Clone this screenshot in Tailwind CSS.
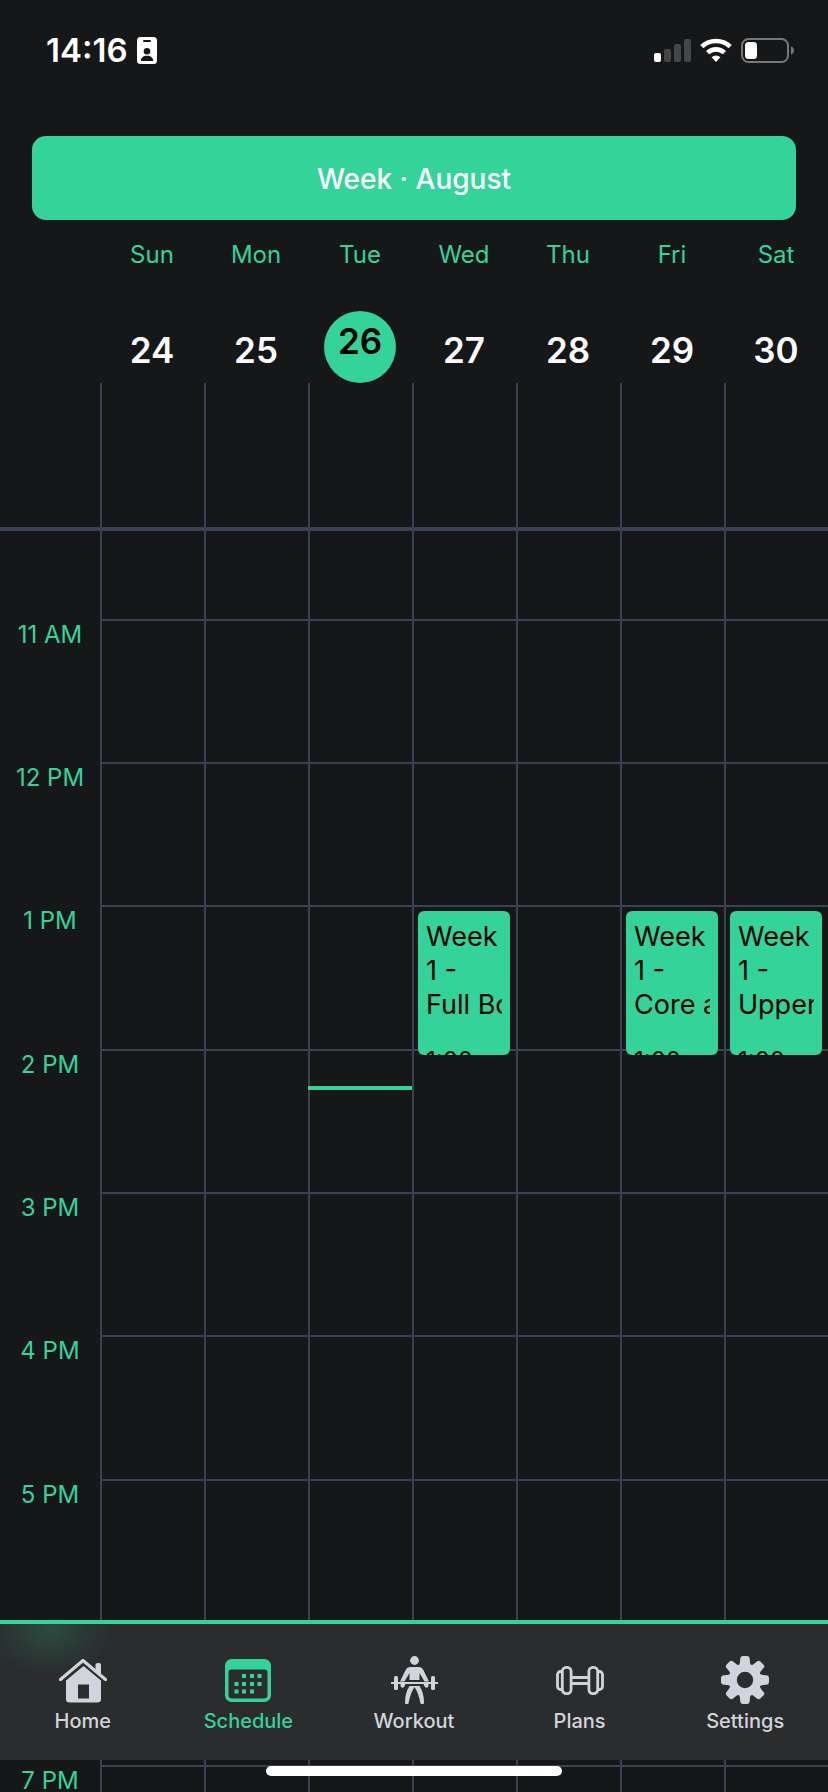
<!DOCTYPE html>
<html lang="en">
<head>
<meta charset="utf-8">
<meta name="viewport" content="width=device-width, initial-scale=1">
<title>Schedule</title>
<script src="https://cdn.jsdelivr.net/npm/@tailwindcss/browser@4"></script>
</head>
<body class="bg-[#161719]">
<div class="relative flex h-screen flex-col overflow-hidden bg-[#161719] font-['Inter',sans-serif] text-white">

  <!-- Status bar -->
  <div class="flex h-[100px] shrink-0 items-center justify-between pr-[34px] pl-[46px]">
    <div class="flex items-center gap-[9px]">
      <span class="text-[33px] leading-10 font-semibold">14:16</span>
      <svg class="h-[27px] w-5" viewBox="0 0 20 27" aria-hidden="true">
        <rect width="20" height="27" rx="3.5" fill="#fff"/>
        <rect x="6" y="3" width="8" height="2" rx="1" fill="#161719"/>
        <circle cx="10" cy="14.2" r="3.3" fill="#161719"/>
        <path d="M3.8 24c0-3.200 2.400-5.200 6.200-5.200s6.200 2 6.200 5.200z" fill="#161719"/>
      </svg>
    </div>
    <div class="flex items-center gap-[9px]">
      <svg class="h-[23px] w-[37px]" viewBox="0 0 37 23" aria-hidden="true">
        <rect y="14" width="7" height="9" rx="2" fill="#fff"/>
        <rect x="10" y="10" width="7" height="13" rx="2" fill="#454648"/>
        <rect x="20" y="5" width="7" height="18" rx="2" fill="#454648"/>
        <rect x="30" width="7" height="23" rx="2" fill="#454648"/>
      </svg>
      <svg class="h-6 w-8" viewBox="0 0 32 24" aria-hidden="true">
        <g fill="none" stroke="#fff" stroke-width="4.600">
          <path d="M1.800 8.700A20.500 20.500 0 0 1 30.200 8.700"/>
          <path d="M7.600 14.700A12.200 12.200 0 0 1 24.400 14.700"/>
        </g>
        <path d="M11.600 19.200a6.600 6.600 0 0 1 8.800 0L16 24z" fill="#fff"/>
      </svg>
      <svg class="h-[25px] w-[53px]" viewBox="0 0 53 25" aria-hidden="true">
        <rect x="1" y="1" width="46" height="23" rx="6.500" fill="none" stroke="#77787a" stroke-width="2"/>
        <rect x="4" y="4" width="12" height="17" rx="3.500" fill="#fff"/>
        <path d="M50 8.500c2 .6 3 2.200 3 4s-1 3.400-3 4z" fill="#77787a"/>
      </svg>
    </div>
  </div>

  <!-- Period selector -->
  <div class="mt-9 shrink-0 px-8">
    <button type="button" class="flex h-[84px] w-full items-center justify-center rounded-[14px] bg-[#34d399] pt-px text-[28px] leading-8 font-medium text-white">Week · August</button>
  </div>

  <!-- Day header -->
  <div class="flex h-[163px] shrink-0">
    <div class="w-[100px] shrink-0"></div>
    <div class="grid flex-1 grid-cols-7 text-center text-2xl text-[#34d399]">
      <div class="pt-[19px]">Sun<p class="mt-[59px] text-[35px] leading-10 font-semibold text-[#fafafa]">24</p></div>
      <div class="pt-[19px]">Mon<p class="mt-[59px] text-[35px] leading-10 font-semibold text-[#fafafa]">25</p></div>
      <div class="pt-[19px]">Tue<p class="mx-auto mt-10 size-[72px] rounded-full bg-[#34d399] text-[35px] leading-[60px] font-semibold text-black">26</p></div>
      <div class="pt-[19px]">Wed<p class="mt-[59px] text-[35px] leading-10 font-semibold text-[#fafafa]">27</p></div>
      <div class="pt-[19px]">Thu<p class="mt-[59px] text-[35px] leading-10 font-semibold text-[#fafafa]">28</p></div>
      <div class="pt-[19px]">Fri<p class="mt-[59px] text-[35px] leading-10 font-semibold text-[#fafafa]">29</p></div>
      <div class="pt-[19px]">Sat<p class="mt-[59px] text-[35px] leading-10 font-semibold text-[#fafafa]">30</p></div>
    </div>
  </div>

  <!-- All-day strip -->
  <div class="flex h-[148px] shrink-0 border-b-4 border-[#394152]">
    <div class="w-[100px] shrink-0"></div>
    <div class="grid flex-1 grid-cols-7 *:border-l-2 *:border-[#394152]"><div></div><div></div><div></div><div></div><div></div><div></div><div></div></div>
  </div>

  <!-- Hours -->
  <main class="min-h-0 flex-1 overflow-hidden">
    <div class="flex h-[88px]">
      <div class="w-[100px] shrink-0"></div>
      <div class="grid flex-1 grid-cols-7 *:border-l-2 *:border-[#394152]"><div></div><div></div><div></div><div></div><div></div><div></div><div></div></div>
    </div>
    <div class="text-2xl text-[#34d399] *:flex *:h-[143px] *:nth-[3n]:h-36">
      <div>
        <div class="w-[100px] shrink-0 text-center">11 AM</div>
        <div class="grid flex-1 grid-cols-7 *:border-t-2 *:border-l-2 *:border-[#394152]"><div></div><div></div><div></div><div></div><div></div><div></div><div></div></div>
      </div>
      <div>
        <div class="w-[100px] shrink-0 text-center">12 PM</div>
        <div class="grid flex-1 grid-cols-7 *:border-t-2 *:border-l-2 *:border-[#394152]"><div></div><div></div><div></div><div></div><div></div><div></div><div></div></div>
      </div>
      <div>
        <div class="w-[100px] shrink-0 text-center">1 PM</div>
        <div class="grid flex-1 grid-cols-7 *:border-t-2 *:border-l-2 *:border-[#394152]">
          <div></div><div></div><div></div>
          <div class="relative">
            <article class="absolute top-1 right-[6px] left-1 h-36 overflow-hidden rounded-md bg-[#34d399] px-2 pt-[9px] text-black">
              <h2 class="overflow-hidden text-[27px] leading-[34px] whitespace-nowrap">Week<br>1 -<br>Full Body</h2>
              <p class="mt-[22px] text-2xl leading-[34px]">1:00</p>
            </article>
          </div>
          <div></div>
          <div class="relative">
            <article class="absolute top-1 right-[6px] left-1 h-36 overflow-hidden rounded-md bg-[#34d399] px-2 pt-[9px] text-black">
              <h2 class="overflow-hidden text-[27px] leading-[34px] whitespace-nowrap">Week<br>1 -<br>Core and</h2>
              <p class="mt-[22px] text-2xl leading-[34px]">1:00</p>
            </article>
          </div>
          <div class="relative">
            <article class="absolute top-1 right-[6px] left-1 h-36 overflow-hidden rounded-md bg-[#34d399] px-2 pt-[9px] text-black">
              <h2 class="overflow-hidden text-[27px] leading-[34px] whitespace-nowrap">Week<br>1 -<br>Upper</h2>
              <p class="mt-[22px] text-2xl leading-[34px]">1:00</p>
            </article>
          </div>
        </div>
      </div>
      <div>
        <div class="w-[100px] shrink-0 text-center">2 PM</div>
        <div class="grid flex-1 grid-cols-7 *:border-t-2 *:border-l-2 *:border-[#394152]"><div></div><div></div><div class="relative"><div class="absolute top-[35px] right-0 -left-[2px] h-1 bg-[#34d399]"></div></div><div></div><div></div><div></div><div></div></div>
      </div>
      <div>
        <div class="w-[100px] shrink-0 text-center">3 PM</div>
        <div class="grid flex-1 grid-cols-7 *:border-t-2 *:border-l-2 *:border-[#394152]"><div></div><div></div><div></div><div></div><div></div><div></div><div></div></div>
      </div>
      <div>
        <div class="w-[100px] shrink-0 text-center">4 PM</div>
        <div class="grid flex-1 grid-cols-7 *:border-t-2 *:border-l-2 *:border-[#394152]"><div></div><div></div><div></div><div></div><div></div><div></div><div></div></div>
      </div>
      <div>
        <div class="w-[100px] shrink-0 text-center">5 PM</div>
        <div class="grid flex-1 grid-cols-7 *:border-t-2 *:border-l-2 *:border-[#394152]"><div></div><div></div><div></div><div></div><div></div><div></div><div></div></div>
      </div>
      <div>
        <div class="w-[100px] shrink-0"></div>
        <div class="grid flex-1 grid-cols-7 *:border-t-2 *:border-l-2 *:border-[#394152]"><div></div><div></div><div></div><div></div><div></div><div></div><div></div></div>
      </div>
      <div>
        <div class="w-[100px] shrink-0 text-center">7 PM</div>
        <div class="grid flex-1 grid-cols-7 *:border-t-2 *:border-l-2 *:border-[#394152]"><div></div><div></div><div></div><div></div><div></div><div></div><div></div></div>
      </div>
    </div>
  </main>

  <!-- Tab bar -->
  <nav class="absolute inset-x-0 bottom-8 grid h-[140px] grid-cols-5 border-t-4 border-[#34d399] bg-[#2a2c2d] bg-[radial-gradient(64px_46px_at_50px_6px,#2c4b40,#2b3a36_50%,#2a2c2d)] pt-8 text-xl font-medium text-[#d1d5db]">
    <a href="#home" class="flex flex-col items-center gap-[3px]">
      <svg class="size-12" viewBox="0 0 48 48" aria-hidden="true">
        <path d="M2 23.500 24.500 4.500 47 23.500" transform="translate(-.5 0)" fill="none" stroke="#d1d5db" stroke-width="3.200" stroke-linecap="round" stroke-linejoin="round"/>
        <path d="M36.500 8.500a2 2 0 0 1 2-1.500h1.500a2 2 0 0 1 2 2v10l-5.500-4.500z" fill="#d1d5db"/>
        <path fill-rule="evenodd" d="M24.500 10 42 24.500V43a3.500 3.500 0 0 1-3.500 3.500h-28A3.500 3.500 0 0 1 7 43V24.500zM19 28.500V42.500h11V28.500z" fill="#d1d5db"/>
      </svg>
      Home
    </a>
    <a href="#schedule" aria-current="page" class="flex flex-col items-center gap-[3px] text-[#34d399]">
      <svg class="size-12" viewBox="0 0 48 48" fill="#34d399" aria-hidden="true">
        <path fill-rule="evenodd" d="M7.500 3h33a6.500 6.500 0 0 1 6.500 6.500v30a6.500 6.500 0 0 1-6.500 6.500h-33A6.500 6.500 0 0 1 1 39.500v-30A6.500 6.500 0 0 1 7.500 3zM7.500 13.500A3 3 0 0 0 4.500 16.500v22.500a3.500 3.500 0 0 0 3.500 3.500h32a3.500 3.500 0 0 0 3.500-3.500v-22.500a3 3 0 0 0-3-3z"/>
        <path d="M18 18h4v4h-4zM26 18h4v4h-4zM33.500 18h4v4h-4zM10.500 26h4v4h-4zM18 26h4v4h-4zM26 26h4v4h-4zM33.500 26h4v4h-4zM10.500 33.500h4v4h-4zM18 33.500h4v4h-4zM26 33.500h4v4h-4z"/>
      </svg>
      Schedule
    </a>
    <a href="#workout" class="flex flex-col items-center gap-[3px]">
      <svg class="size-12" viewBox="0 0 48 48" fill="#d1d5db" aria-hidden="true">
        <circle cx="24.500" cy="4.500" r="4.400"/>
        <path d="M20.500 11h8c2.500 0 4 1.200 5 3.300l5.500 11.200h-4.500l-5-8.500v7h-10v-7l-5 8.500H10l5.500-11.200c1-2.100 2.500-3.300 5-3.300z"/>
        <path d="M1 26h47v2H1z"/>
        <rect x="4" y="20" width="4" height="14" rx="1.500"/>
        <rect x="41" y="20" width="4" height="14" rx="1.500"/>
        <path d="M10.500 28h5l-1.300 2.700a2 2 0 0 1-3.700-1zM38.500 28h-5l1.300 2.700a2 2 0 0 0 3.700-1zM19.500 30h10c3 4.500 4.500 10 4.500 16.500 0 2.200-3 2.600-3.600.4-1.200-6-3-11.500-5.900-15.900-2.900 4.400-4.700 9.900-5.900 15.900-.6 2.200-3.600 1.800-3.600-.4 0-6.500 1.500-12 4.500-16.500z"/>
      </svg>
      Workout
    </a>
    <a href="#plans" class="flex flex-col items-center gap-[3px]">
      <svg class="size-12" viewBox="0 0 48 48" fill="none" stroke="#d1d5db" stroke-width="2.800" aria-hidden="true">
        <rect x="6.300" y="11.400" width="8.800" height="26.200" rx="4"/>
        <rect x="32.900" y="11.400" width="8.800" height="26.200" rx="4"/>
        <path d="M6.300 15.500H4.500a3 3 0 0 0-3 3v12a3 3 0 0 0 3 3h1.800M41.700 15.500h1.800a3 3 0 0 1 3 3v12a3 3 0 0 1-3 3h-1.800M15.100 21.500h17.800M15.100 27.500h17.800"/>
      </svg>
      Plans
    </a>
    <a href="#settings" class="flex flex-col items-center gap-[3px]">
      <svg class="size-12" viewBox="0 0 48 48" aria-hidden="true">
        <g fill="#d1d5db">
          <path fill-rule="evenodd" d="M24 7.500a16.500 16.500 0 1 1 0 33 16.500 16.500 0 0 1 0-33zm0 8.300a8.200 8.200 0 1 0 0 16.400 8.200 8.200 0 0 0 0-16.400z"/>
          <path id="tooth" d="M17.500 10c1.200-1.500 1.500-3 1.800-7.500A2.600 2.600 0 0 1 21.700 0h4.600a2.600 2.600 0 0 1 2.400 2.500c.3 4.500.6 6 1.800 7.500z"/>
          <use href="#tooth" transform="rotate(45 24 24)"/>
          <use href="#tooth" transform="rotate(90 24 24)"/>
          <use href="#tooth" transform="rotate(135 24 24)"/>
          <use href="#tooth" transform="rotate(180 24 24)"/>
          <use href="#tooth" transform="rotate(225 24 24)"/>
          <use href="#tooth" transform="rotate(270 24 24)"/>
          <use href="#tooth" transform="rotate(315 24 24)"/>
        </g>
      </svg>
      Settings
    </a>
  </nav>

  <!-- Home indicator -->
  <div class="absolute bottom-4 left-1/2 h-[10px] w-[296px] -translate-x-1/2 rounded-full bg-white"></div>
</div>
</body>
</html>
